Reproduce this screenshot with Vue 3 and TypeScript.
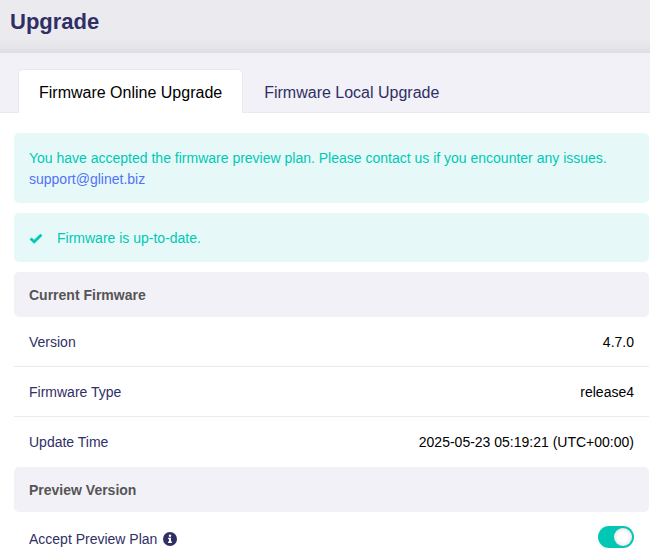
<script setup lang="ts">
import { ref } from 'vue'

interface InfoRow {
  label: string
  value: string
}

const tabs: string[] = ['Firmware Online Upgrade', 'Firmware Local Upgrade']
const activeTab = ref<number>(0)
const acceptPreview = ref<boolean>(true)

const firmware: InfoRow[] = [
  { label: 'Version', value: '4.7.0' },
  { label: 'Firmware Type', value: 'release4' },
  { label: 'Update Time', value: '2025-05-23 05:19:21 (UTC+00:00)' },
]
</script>

<template>
  <div class="page">
    <header class="page-header">
      <h1>Upgrade</h1>
    </header>

    <div class="tabs" role="tablist">
      <button
        v-for="(tab, index) in tabs"
        :key="tab"
        type="button"
        role="tab"
        class="tab"
        :class="{ active: activeTab === index }"
        :aria-selected="activeTab === index"
        @click="activeTab = index"
      >
        {{ tab }}
      </button>
    </div>

    <main class="content">
      <div class="notice">
        <p>You have accepted the firmware preview plan. Please contact us if you encounter any issues.</p>
        <p><a href="mailto:support@glinet.biz">support@glinet.biz</a></p>
      </div>

      <div class="notice status">
        <svg class="check" viewBox="0 0 14 14" aria-hidden="true">
          <path d="M1.6 6.4 5.2 9.8 12.4 2.8" fill="none" stroke="currentColor" stroke-width="2.7" />
        </svg>
        <p>Firmware is up-to-date.</p>
      </div>

      <section>
        <h2>Current Firmware</h2>
        <dl>
          <div v-for="row in firmware" :key="row.label" class="row">
            <dt>{{ row.label }}</dt>
            <dd>{{ row.value }}</dd>
          </div>
        </dl>
      </section>

      <section>
        <h2>Preview Version</h2>
        <div class="row">
          <label class="plan" for="accept-preview">
            Accept Preview Plan
            <svg class="info" viewBox="0 0 14 14" aria-hidden="true">
              <circle cx="7" cy="7" r="7" fill="#2f2f66" />
              <circle cx="7" cy="3.7" r="1.2" fill="#fff" />
              <path d="M5.2 5.8H8V9.5H8.9V10.9H5.1V9.5H6V7.2H5.2Z" fill="#fff" />
            </svg>
          </label>
          <input id="accept-preview" v-model="acceptPreview" class="switch" type="checkbox" role="switch" />
        </div>
      </section>
    </main>
  </div>
</template>

<style>
html {
  scrollbar-width: none;
}

body {
  background: #fff;
}
</style>

<style scoped>
.page {
  font-family: "Liberation Sans", Arial, sans-serif;
  font-size: 14px;
  line-height: 21px;
  color: #2f2f66;
}

h1,
h2,
p,
dl,
dd {
  margin: 0;
}

.page-header {
  padding: 8px 10px 18px;
  background: linear-gradient(to top, #dedde2, #e6e5ea 6px, #ebeaef 16px);
}

h1 {
  font-size: 22px;
  line-height: 27px;
}

.tabs {
  display: flex;
  padding: 16px 18px 0;
  background: #f2f1f7;
  box-shadow: inset 0 -1px #e9e9ee;
}

.tab {
  padding: 2px 20px 0;
  border: 1px solid transparent;
  border-bottom: 0;
  border-radius: 5px 5px 0 0;
  background: transparent;
  color: #2f2f66;
  font: 16px/41px "Liberation Sans", Arial, sans-serif;
  cursor: pointer;
}

.tab.active {
  border-color: #e9e9ee;
  background: #fff;
  color: #000;
}

.content {
  padding: 20px 1px 0 14px;
}

.notice {
  margin-bottom: 10px;
  padding: 15px 15px 13px;
  border-radius: 5px;
  background: #e6f9f8;
  color: #00c8b5;
}

.notice a {
  color: #5272f7;
  text-decoration: none;
}

.status {
  display: flex;
  align-items: center;
  gap: 14px;
}

.check {
  width: 14px;
  height: 14px;
}

h2 {
  padding: 13px 15px 11px;
  border-radius: 5px;
  background: #f2f1f7;
  color: #555;
  font-size: 14px;
  line-height: 21px;
}

.row {
  display: flex;
  align-items: center;
  justify-content: space-between;
  box-sizing: border-box;
  height: 50px;
  padding: 0 15px;
  border-bottom: 1px solid #ebebeb;
}

.row:last-child {
  border-bottom-color: transparent;
}

dt,
dd {
  padding-top: 2px;
}

dd {
  color: #000;
}

.plan {
  display: flex;
  align-items: center;
  gap: 6px;
  padding-top: 5px;
}

.info {
  width: 14px;
  height: 14px;
}

.switch {
  appearance: none;
  display: flex;
  align-items: center;
  box-sizing: border-box;
  width: 36px;
  height: 22px;
  margin: 0;
  padding: 2px;
  border-radius: 11px;
  background: #ccc;
  cursor: pointer;
}

.switch::before {
  content: "";
  width: 18px;
  height: 18px;
  border-radius: 50%;
  background: radial-gradient(circle, #fff 35%, #ebebeb 70%);
  box-shadow: 0 0 1px #8a9a98;
}

.switch:checked {
  justify-content: flex-end;
  background: #00c8b5;
}
</style>
